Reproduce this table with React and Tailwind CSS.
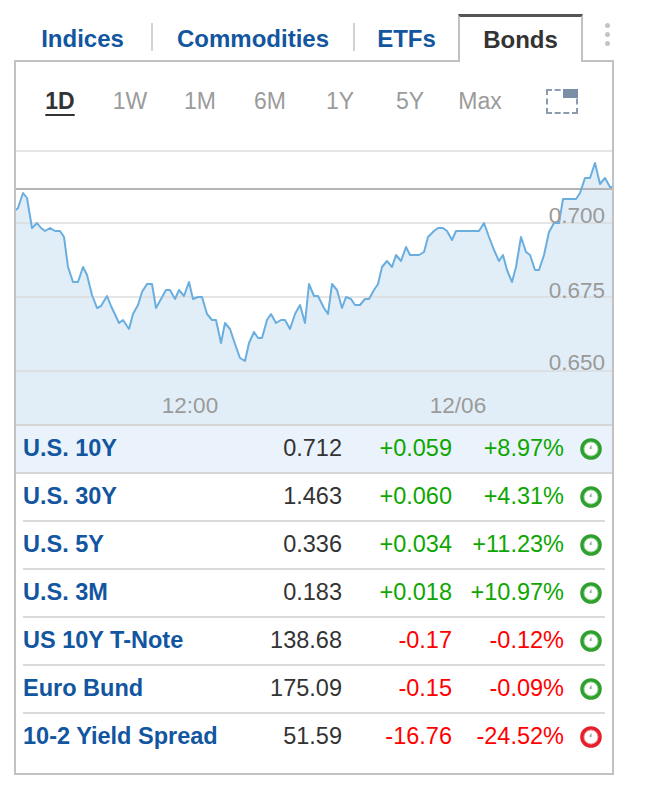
import React from "react";

const tabs = [
  { label: "Indices", w: "w-[137px]" },
  { label: "Commodities", w: "w-[200px]" },
  { label: "ETFs", w: "w-[103px]" },
];

const periods = ["1D", "1W", "1M", "6M", "1Y", "5Y", "Max"];

const rows = [
  { name: "U.S. 10Y", last: "0.712", chg: "+0.059", pct: "+8.97%", up: true },
  { name: "U.S. 30Y", last: "1.463", chg: "+0.060", pct: "+4.31%", up: true },
  { name: "U.S. 5Y", last: "0.336", chg: "+0.034", pct: "+11.23%", up: true },
  { name: "U.S. 3M", last: "0.183", chg: "+0.018", pct: "+10.97%", up: true },
  { name: "US 10Y T-Note", last: "138.68", chg: "-0.17", pct: "-0.12%", up: false },
  { name: "Euro Bund", last: "175.09", chg: "-0.15", pct: "-0.09%", up: false },
  { name: "10-2 Yield Spread", last: "51.59", chg: "-16.76", pct: "-24.52%", up: false, red: true },
];

// chart points in page coordinates
const pts = [
  [16, 210], [18, 208], [23, 193], [27, 198], [32, 228], [37, 223], [41, 228], [45, 231], [50, 228],
  [55, 231], [60, 231], [64, 237], [68, 267], [73, 282], [78, 282], [83, 267], [87, 275], [92, 295],
  [97, 308], [101, 306], [107, 296], [111, 306], [119, 323], [123, 320], [129, 329], [133, 314],
  [138, 305], [142, 292], [147, 284], [152, 284], [156, 308], [161, 299], [166, 290], [170, 290],
  [175, 299], [179, 290], [184, 296], [189, 282], [193, 299], [198, 297], [202, 297], [207, 314],
  [212, 320], [216, 320], [221, 343], [225, 323], [230, 329], [235, 344], [240, 358], [245, 361],
  [249, 343], [254, 332], [258, 338], [262, 338], [267, 320], [271, 314], [276, 323], [281, 320],
  [285, 320], [290, 329], [295, 314], [300, 305], [305, 323], [309, 284], [314, 296], [318, 296],
  [324, 308], [328, 314], [332, 284], [337, 290], [342, 308], [346, 297], [351, 299], [355, 305],
  [360, 305], [365, 299], [369, 299], [374, 290], [378, 284], [382, 267], [387, 261], [392, 267],
  [396, 255], [401, 261], [406, 247], [410, 255], [419, 255], [424, 252], [428, 237], [434, 231],
  [438, 228], [443, 228], [447, 231], [452, 240], [456, 231], [479, 231], [484, 223], [489, 237],
  [494, 250], [499, 261], [503, 255], [507, 270], [512, 282], [516, 267], [521, 237], [526, 252],
  [530, 255], [535, 270], [539, 270], [544, 255], [549, 232], [554, 223], [559, 223], [563, 199],
  [576, 199], [580, 193], [585, 178], [590, 178], [595, 163], [600, 184], [605, 178], [610, 187],
  [612, 187],
];

const line = pts.map(([x, y], i) => `${i ? "L" : "M"}${x} ${y}`).join(" ");
const area = `${line} L612 424 L16 424 Z`;

function Clock({ red }) {
  const c = red ? "#e51f2b" : "#2f9f2f";
  const inner = red ? "#f47c83" : "#7ccf7c";
  return (
    <svg width="24" height="24" viewBox="0 0 24 24">
      <circle cx="12" cy="12" r="9" fill="#fff" stroke={c} strokeWidth="3.6" />
      <circle cx="12" cy="12" r="7" fill="none" stroke={inner} strokeWidth="0.9" />
      <path d="M12.5 12.2 L12.5 7.4 L10.3 11.6 Z" fill="#9b9b9b" />
    </svg>
  );
}

function Chart() {
  return (
    <svg width="596" height="298" viewBox="16 126 596 298" className="block">
      <path d={area} fill="#e2eef7" />
      {[151, 223, 297, 371].map((y) => (
        <line key={y} x1="16" x2="612" y1={y} y2={y} stroke="#dadada" strokeOpacity="0.7" strokeWidth="2" />
      ))}
      <line x1="16" x2="612" y1="189" y2="189" stroke="#b4b4b4" strokeWidth="2" />
      <path d={line} fill="none" stroke="#6aaee0" strokeWidth="2" strokeLinejoin="round" />
      <g fill="#9a9a9a" fontSize="22.5" fontFamily="'Liberation Sans', Arial, sans-serif">
        <text x="605" y="223" textAnchor="end">0.700</text>
        <text x="605" y="298" textAnchor="end">0.675</text>
        <text x="605" y="370" textAnchor="end">0.650</text>
        <text x="190" y="413" textAnchor="middle">12:00</text>
        <text x="458" y="413" textAnchor="middle">12/06</text>
      </g>
    </svg>
  );
}

export default function App() {
  return (
    <div className="w-[646px] h-[788px] bg-white font-['Liberation_Sans',Arial,sans-serif] pt-[14px]">
      {/* Tabs */}
      <div className="flex items-end ml-[14px]">
        {tabs.map((t, i) => (
          <div key={t.label} className="flex items-center h-[46px]">
            {i > 0 && <div className="w-[2px] h-[28px] bg-[#d2d2d2]" />}
            <div className={`${t.w} text-center text-[24px] font-bold text-[#1256a0] pt-[3px]`}>
              {t.label}
            </div>
          </div>
        ))}
        <div className="relative z-10 -mb-[2px] w-[125px] h-[48px] bg-white border-t-[3px] border-x-2 border-t-[#555] border-x-[#c2c2c2] flex items-center justify-center text-[24px] font-bold text-[#333]">
          Bonds
        </div>
        <div className="h-[46px] flex flex-col gap-[4px] pt-[9px] ml-[22px]">
          <span className="w-[5px] h-[5px] rounded-full bg-[#c4c4c4]" />
          <span className="w-[5px] h-[5px] rounded-full bg-[#c4c4c4]" />
          <span className="w-[5px] h-[5px] rounded-full bg-[#c4c4c4]" />
        </div>
      </div>

      {/* Panel */}
      <div className="ml-[14px] w-[600px] border-2 border-[#c2c2c2] pb-[13px]">
        {/* Periods */}
        <div className="h-[64px] flex items-center pl-[9px] pt-[14px]">
          {periods.map((p, i) => (
            <div key={p} className="w-[70px] text-center text-[23px]">
              {i === 0 ? (
                <span className="font-bold text-[#333] underline decoration-2 underline-offset-[5px]">{p}</span>
              ) : (
                <span className="text-[#9b9b9b]">{p}</span>
              )}
            </div>
          ))}
          <div className="relative ml-[31px] w-[32px] h-[25px] border-2 border-dashed border-[#8d9cb0]">
            <div className="absolute -top-[2px] -right-[2px] w-[15px] h-[9px] bg-[#7a8ea6]" />
          </div>
        </div>

        <Chart />

        {/* Table */}
        <div className="text-[23.5px]">
          {rows.map((r, i) => (
            <div
              key={r.name}
              className={
                i === 0
                  ? "border-y-2 border-[#d6d6d6] bg-[#eaf3fb] px-[7px]"
                  : "px-[7px]"
              }
            >
              <div
                className={`flex items-center ${i > 1 ? "h-[48px] border-t-2 border-[#dadada]" : "h-[46px]"}`}
              >
                <div className="w-[229px] font-bold text-[#1256a0] whitespace-nowrap">{r.name}</div>
                <div className="w-[90px] text-right text-[#333]">{r.last}</div>
                <div className={`w-[110px] text-right ${r.up ? "text-[#0ea600]" : "text-[#ff0000]"}`}>{r.chg}</div>
                <div className={`w-[112px] text-right ${r.up ? "text-[#0ea600]" : "text-[#ff0000]"}`}>{r.pct}</div>
                <div className="ml-[15px] flex items-center">
                  <Clock red={r.red} />
                </div>
              </div>
            </div>
          ))}
        </div>
      </div>
    </div>
  );
}
